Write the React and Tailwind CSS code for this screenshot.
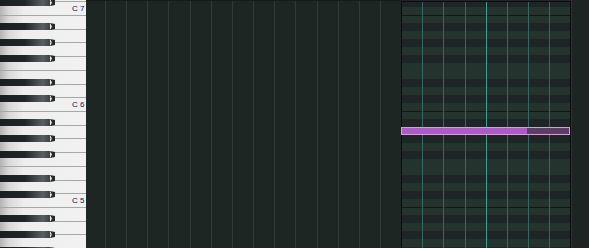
const ROW = 8;
const TOP = 7; // top of the C7 row
const BLACK = [1, 3, 6, 8, 10];

// rows from C#7 (i = -1) downward
const rows = Array.from({ length: 32 }, (_, k) => {
  const i = k - 1;
  const pc = (((-i) % 12) + 12) % 12;
  return { y: TOP + i * ROW, black: BLACK.includes(pc), pc };
});

const whiteLines = Array.from({ length: 20 }, (_, k) => 15 + (k - 1) * (96 / 7));
const beats = Array.from({ length: 23 }, (_, k) => Math.round(19 + k * 21.15));

function Piano() {
  return (
    <svg width="86" height="248" className="block">
      <defs>
        <linearGradient id="wk" x1="0" x2="1" y1="0" y2="0">
          <stop offset="0" stopColor="#b4b4b4" />
          <stop offset="0.1" stopColor="#d9d9d9" />
          <stop offset="0.28" stopColor="#eeeeee" />
          <stop offset="1" stopColor="#f1f1f2" />
        </linearGradient>
        <linearGradient id="bk" x1="0" x2="1" y1="0" y2="0">
          <stop offset="0" stopColor="#1b1e1e" />
          <stop offset="0.5" stopColor="#222626" />
          <stop offset="0.86" stopColor="#5a5f5f" />
          <stop offset="1" stopColor="#3e4242" />
        </linearGradient>
      </defs>
      <rect x="0" y="0" width="86" height="248" fill="url(#wk)" />
      {whiteLines.map((y, i) => (
        <rect key={i} x="0" y={Math.round(y)} width="86" height="1" fill="#a6a8a8" />
      ))}
      {rows.filter(r => r.black).map((r, i) => (
        <g key={i}>
          <rect x="0" y={r.y} width="50" height="7" fill="url(#bk)" />
          <polygon points={`50,${r.y} 55,${r.y + 1} 55,${r.y + 6} 50,${r.y + 7} 52,${r.y + 3.5}`} fill="#262a2a" />
        </g>
      ))}
      {[['C 7', 11], ['C 6', 107], ['C 5', 203]].map(([t, y]) => (
        <text key={t} x="84.5" y={y} textAnchor="end" fontSize="8" fill="#04145a" fontFamily="'Liberation Sans', Arial, sans-serif">
          {t}
        </text>
      ))}
    </svg>
  );
}

function Grid() {
  const selX = 315;
  return (
    <svg width="485" height="248" className="block">
      <rect x="0" y="0" width="485" height="248" fill="#1e2624" />
      <rect x="0" y="0" width="485" height="1" fill="#151b1a" />
      {beats.filter(x => x < selX).map(x => (
        <rect key={x} x={x} y="1" width="1" height="247" fill="#303a37" />
      ))}
      {/* selected range */}
      {rows.map((r, i) => (
        <rect key={i} x={selX} y={r.y} width={485 - selX} height={ROW} fill={r.black ? '#1d2624' : '#25332f'} />
      ))}
      {[15, 111, 207].map(y => (
        <rect key={y} x={selX} y={y} width={485 - selX} height="1" fill="#121716" />
      ))}
      {beats.filter(x => x > selX && x < 484).map(x => (
        <rect key={x} x={x} y="1" width="1" height="247" fill={x === 400 ? '#3c9e90' : '#376761'} />
      ))}
      <rect x={selX} y="1" width={485 - selX} height="1" fill="#0b0d0d" />
      <rect x={selX} y="1" width="1" height="247" fill="#0b0d0d" />
      <rect x="484" y="1" width="1" height="247" fill="#0b0d0d" />
      {/* note */}
      <rect x={selX} y="127" width="169" height="8" fill="#d4a0dc" />
      <rect x={selX + 1} y="128" width="125" height="6" fill="#ad5cc6" />
      <rect x={selX + 126} y="128" width="42" height="6" fill="#5e3e68" />
    </svg>
  );
}

export default function App() {
  return (
    <div className="flex w-[589px] h-[248px] overflow-hidden bg-[#1e2624]">
      <div className="w-[86px] shrink-0">
        <Piano />
      </div>
      <div className="w-[485px] shrink-0">
        <Grid />
      </div>
      <div className="flex-1 bg-[#1d2422] border-l border-[#2b3331]" />
    </div>
  );
}
